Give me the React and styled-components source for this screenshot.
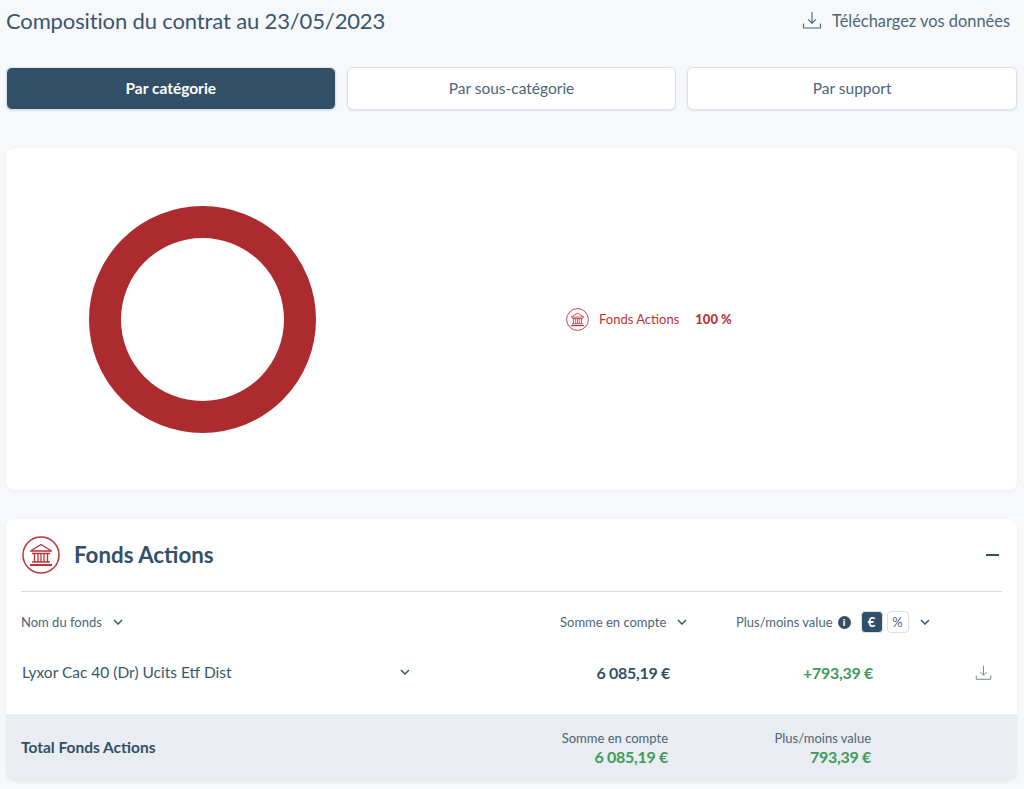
import styled, { createGlobalStyle } from 'styled-components'

const GlobalStyle = createGlobalStyle`
  html, body {
    margin: 0;
    padding: 0;
    background: #f7f8fa;
    font-family: "Lato", "Liberation Sans", sans-serif;
    color: #31506a;
  }
`

const Page = styled.div`
  width: 1024px;
  height: 789px;
  overflow: hidden;
  box-sizing: border-box;
  padding: 0 7px 0 6px;
`

const TopBar = styled.div`
  display: flex;
  justify-content: space-between;
  align-items: center;
  height: 40px;
  margin-bottom: 27px;
`

const Title = styled.h1`
  margin: 0;
  font-size: 22px;
  font-weight: 400;
  letter-spacing: -0.14px;
  color: #3a566c;
`

const DownloadLink = styled.a`
  display: flex;
  align-items: center;
  gap: 10px;
  padding-right: 7px;
  font-size: 16.4px;
  color: #4c6579;
`

const Tabs = styled.div`
  display: grid;
  grid-template-columns: repeat(3, 1fr);
  gap: 11px;
  margin-bottom: 38px;
`

const Tab = styled.button`
  height: 43px;
  padding: 0 0 1px;
  font-family: inherit;
  font-size: 15.5px;
  font-weight: ${p => (p.$active ? 700 : 400)};
  color: ${p => (p.$active ? '#ffffff' : '#4c6579')};
  background: ${p => (p.$active ? '#315067' : '#ffffff')};
  border: 1px solid #dde2e7;
  border-radius: 6px;
  box-shadow: 0 1px 2px rgba(40, 60, 80, 0.12);
`

const ChartCard = styled.section`
  display: flex;
  align-items: center;
  height: 342px;
  padding-left: 83px;
  box-sizing: border-box;
  background: #fff;
  border-radius: 8px;
  box-shadow: 0 1px 4px rgba(40, 60, 80, 0.05);
  margin-bottom: 29px;
`

const Legend = styled.div`
  display: flex;
  align-items: center;
  margin-left: 250px;
  font-size: 13px;
  color: #b9343a;
`

const LegendName = styled.span`
  margin: 0 16px 0 10px;
`

const LegendValue = styled.b`
  font-weight: 900;
`

const FundCard = styled.section`
  height: 262px;
  background: #fff;
  border-radius: 8px;
  overflow: hidden;
  box-shadow: 0 1px 4px rgba(40, 60, 80, 0.05);
  display: flex;
  flex-direction: column;
`

const FundHeader = styled.div`
  display: flex;
  align-items: center;
  height: 73px;
  margin: 0 15px;
  box-sizing: border-box;
  padding: 0 3px 0 1px;
  border-bottom: 1px solid #d5dce3;
`

const FundTitle = styled.h2`
  flex: 1;
  margin: 0 0 2px 14px;
  font-size: 22.3px;
  font-weight: 700;
  color: #31506a;
`

const Collapse = styled.span`
  width: 13px;
  height: 2px;
  background: #31506a;
`

const ColumnHeads = styled.div`
  display: grid;
  grid-template-columns: 539px 176px auto;
  align-items: center;
  height: 22px;
  margin: 19px 0 0 15px;
  font-size: 13px;
  color: #4c6579;
`

const HeadCell = styled.div`
  display: flex;
  align-items: center;
`

const Chevron = styled.svg`
  width: 10px;
  height: 6px;
  margin-left: ${p => p.$gap || 11}px;
  fill: none;
  stroke: #3a566c;
  stroke-width: 1.5;
`

const InfoDot = styled.span`
  display: flex;
  align-items: center;
  justify-content: center;
  width: 13px;
  height: 13px;
  margin-left: 5px;
  border-radius: 50%;
  background: #31506a;
  color: #fff;
  font-size: 10px;
  font-weight: 900;
`

const UnitSwitch = styled.span`
  display: flex;
  align-items: center;
  justify-content: center;
  box-sizing: border-box;
  width: 22px;
  height: 22px;
  margin-left: ${p => p.$gap}px;
  border-radius: 4px;
  font-size: 13px;
  font-weight: ${p => (p.$on ? 700 : 400)};
  color: ${p => (p.$on ? '#ffffff' : '#4c6579')};
  background: ${p => (p.$on ? '#315067' : '#ffffff')};
  border: 1px solid #dde2e7;
`

const FundRow = styled.div`
  display: grid;
  grid-template-columns: 388px 260px 203px 1fr;
  align-items: center;
  height: 44px;
  margin: 17px 0 0 16px;
`

const FundName = styled.div`
  display: flex;
  align-items: center;
  justify-content: space-between;
  font-size: 15.5px;
  color: #3a566c;
`

const Amount = styled.div`
  text-align: right;
  font-size: 16px;
  font-weight: 700;
  letter-spacing: -0.3px;
  color: ${p => (p.$green ? '#3f9a5a' : '#31506a')};
`

const RowAction = styled.div`
  display: flex;
  justify-content: flex-end;
  padding-right: 25px;
`

const Total = styled.div`
  display: grid;
  grid-template-columns: 497px 150px 203px;
  align-items: center;
  height: 67px;
  margin-top: auto;
  padding-left: 15px;
  background: #e9ecf1;
`

const TotalLabel = styled.div`
  font-size: 15.5px;
  font-weight: 700;
  margin-top: -1px;
  color: #31506a;
`

const TotalCell = styled.div`
  text-align: right;
  font-size: 13px;
  line-height: 18px;
  color: #4c6579;
`

const TotalValue = styled.div`
  font-size: 16px;
  line-height: 20px;
  font-weight: 700;
  letter-spacing: -0.3px;
  color: #3f9a5a;
`

const DownloadIcon = ({ size = 20, color = '#4c6579' }) => (
  <svg width={size} height={size} viewBox="0 0 20 20" fill="none" stroke={color} strokeWidth="1.1">
    <path d="M10 2v11M6.2 9.4 10 13.2l3.8-3.8" />
    <path d="M1.5 13.5v4.5h17v-4.5" />
  </svg>
)

const BankIcon = ({ size }) => (
  <svg width={size} height={size} viewBox="0 0 38 38" fill="none" stroke="#b9343a">
    <circle cx="19" cy="19" r="18" strokeWidth="1.5" />
    <path d="M8.5 15 19 8.5 29.5 15Z" strokeWidth="1.4" strokeLinejoin="round" />
    <path d="M10 17.5h18M10 26h18" strokeWidth="1.4" />
    <path d="M12.5 17.5v8.5M16 17.5v8.5M19 17.5v8.5M22 17.5v8.5M25.5 17.5v8.5" strokeWidth="1.3" />
    <path d="M8 29h22" strokeWidth="2" />
  </svg>
)

const ChevronDown = ({ gap }) => (
  <Chevron $gap={gap} viewBox="0 0 10 6">
    <path d="M1 1l4 4 4-4" />
  </Chevron>
)

const App = () => (
  <Page>
    <GlobalStyle />
    <TopBar>
      <Title>Composition du contrat au 23/05/2023</Title>
      <DownloadLink>
        <DownloadIcon />
        Téléchargez vos données
      </DownloadLink>
    </TopBar>

    <Tabs>
      <Tab $active>Par catégorie</Tab>
      <Tab>Par sous-catégorie</Tab>
      <Tab>Par support</Tab>
    </Tabs>

    <ChartCard>
      <svg width="227" height="227" viewBox="0 0 227 227">
        <circle cx="113.5" cy="113.5" r="97.5" fill="none" stroke="#ab2b2f" strokeWidth="32" />
      </svg>
      <Legend>
        <BankIcon size={23} />
        <LegendName>Fonds Actions</LegendName>
        <LegendValue>100 %</LegendValue>
      </Legend>
    </ChartCard>

    <FundCard>
      <FundHeader>
        <BankIcon size={38} />
        <FundTitle>Fonds Actions</FundTitle>
        <Collapse />
      </FundHeader>

      <ColumnHeads>
        <HeadCell>
          Nom du fonds
          <ChevronDown />
        </HeadCell>
        <HeadCell>
          Somme en compte
          <ChevronDown />
        </HeadCell>
        <HeadCell>
          Plus/moins value
          <InfoDot>i</InfoDot>
          <UnitSwitch $on $gap={10}>€</UnitSwitch>
          <UnitSwitch $gap={4}>%</UnitSwitch>
          <ChevronDown />
        </HeadCell>
      </ColumnHeads>

      <FundRow>
        <FundName>
          Lyxor Cac 40 (Dr) Ucits Etf Dist
          <ChevronDown />
        </FundName>
        <Amount>6 085,19 €</Amount>
        <Amount $green>+793,39 €</Amount>
        <RowAction>
          <DownloadIcon size={17} color="#6b7f90" />
        </RowAction>
      </FundRow>

      <Total>
        <TotalLabel>Total Fonds Actions</TotalLabel>
        <TotalCell>
          Somme en compte
          <TotalValue>6 085,19 €</TotalValue>
        </TotalCell>
        <TotalCell>
          Plus/moins value
          <TotalValue>793,39 €</TotalValue>
        </TotalCell>
      </Total>
    </FundCard>
  </Page>
)

export default App
